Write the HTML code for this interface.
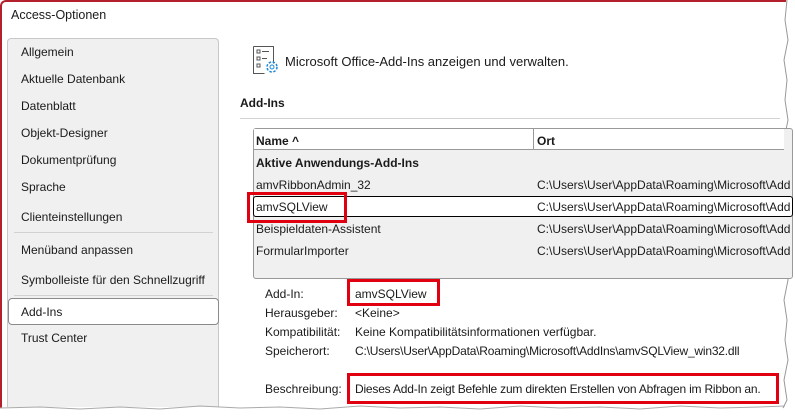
<!DOCTYPE html>
<html><head><meta charset="utf-8"><style>
*{margin:0;padding:0;box-sizing:border-box}
body{width:795px;height:419px;background:#fff;font-family:"Liberation Sans",sans-serif;font-size:12px;color:#1a1a1a;position:relative;overflow:hidden}
.a{position:absolute;white-space:nowrap}
.win{position:absolute;left:0;top:0;width:786px;height:408px;border-left:2px solid #b3202c;border-top:2px solid #b3202c;border-top-left-radius:6px;background:#fff}
.side{position:absolute;left:7px;top:38px;width:212px;height:369px;background:#f0f0f0;border:1px solid #c8c8c8;border-bottom:none;border-radius:4px 4px 0 0}
.sep{position:absolute;height:1px;background:#d2d2d2}
.red{position:absolute;border:3px solid #e00010}
</style></head><body>
<div class="win"></div>
<svg class="a" style="left:775px;top:0" width="20" height="419"><polyline fill="none" stroke="#999" stroke-width="1" points="12,0 10,20 13,40 9,60 12,80 10,100 13,120 9,140 12,160 10,180 13,200 9,220 12,240 10,260 13,280 9,300 12,320 10,340 13,360 9,380 12,400 8,408"/></svg>
<div class="side"></div>
<svg class="a" style="left:0;top:400px" width="795" height="19"><polyline fill="none" stroke="#aaa" stroke-width="1" points="0,8 40,7 80,9 120,7 160,9 200,6 240,8 280,7 320,9 360,6 400,8 440,7 480,9 520,6 560,8 600,7 640,9 680,6 720,8 760,7 785,6"/></svg>
<div class="a" style="left:11px;top:8px;font-size:12.5px">Access-Optionen</div>
<div class="a" style="left:21px;top:45px">Allgemein</div>
<div class="a" style="left:21px;top:72px">Aktuelle Datenbank</div>
<div class="a" style="left:21px;top:99px">Datenblatt</div>
<div class="a" style="left:21px;top:126px">Objekt-Designer</div>
<div class="a" style="left:21px;top:153px">Dokumentprüfung</div>
<div class="a" style="left:21px;top:180px">Sprache</div>
<div class="a" style="left:21px;top:210px">Clienteinstellungen</div>
<div class="sep" style="left:14px;top:232px;width:199px"></div>
<div class="a" style="left:21px;top:243px">Menüband anpassen</div>
<div class="a" style="left:21px;top:273px">Symbolleiste für den Schnellzugriff</div>
<div class="sep" style="left:14px;top:295px;width:199px"></div>
<div class="a" style="left:8px;top:298px;width:211px;height:27px;background:#fff;border:1px solid #8a8a8a;border-radius:4px"></div>
<div class="a" style="left:21px;top:305px">Add-Ins</div>
<div class="a" style="left:21px;top:331px">Trust Center</div>
<svg class="a" style="left:252px;top:45px" width="32" height="32" viewBox="0 0 32 32"><path d="M1.5 1.5h20v17" fill="none" stroke="#555"/><path d="M1.5 1.5v27h11" fill="none" stroke="#555"/><rect x="5" y="5" width="3" height="3" fill="none" stroke="#555"/><rect x="5" y="12" width="3" height="3" fill="none" stroke="#555"/><rect x="5" y="19" width="3" height="3" fill="none" stroke="#555"/><path d="M10 6.5h7M10 13.5h5" stroke="#555"/><circle cx="20" cy="22" r="5" fill="none" stroke="#1e88d6" stroke-width="1.5" stroke-dasharray="2.5 1.5"/><circle cx="20" cy="22" r="2" fill="none" stroke="#1e88d6"/></svg>
<div class="a" style="left:285px;top:54px;font-size:13px">Microsoft Office-Add-Ins anzeigen und verwalten.</div>
<div class="a" style="left:240px;top:96px;font-weight:bold">Add-Ins</div>
<div class="sep" style="left:240px;top:118px;width:540px"></div>
<div class="a" style="left:253px;top:128px;width:540px;height:151px;background:#f0f0f0;border:1px solid #999;border-radius:3px"></div>
<div class="a" style="left:254px;top:129px;width:530px;height:21px;background:#fff;border-bottom:1px solid #999"></div>
<div class="a" style="left:533px;top:129px;width:1px;height:21px;background:#999"></div>
<div class="a" style="left:256px;top:134px;font-weight:bold">Name ^</div>
<div class="a" style="left:537px;top:134px;font-weight:bold">Ort</div>
<div class="a" style="left:256px;top:156px;font-weight:bold">Aktive Anwendungs-Add-Ins</div>
<div class="a" style="left:256px;top:178px">amvRibbonAdmin_32</div>
<div class="a" style="left:537px;top:178px">C:\Users\User\AppData\Roaming\Microsoft\Add</div>
<div class="a" style="left:253px;top:196px;width:540px;height:21px;background:#fff;border:1.5px solid #000;border-radius:3px"></div>
<div class="a" style="left:256px;top:200px">amvSQLView</div>
<div class="a" style="left:537px;top:200px">C:\Users\User\AppData\Roaming\Microsoft\Add</div>
<div class="a" style="left:256px;top:222px">Beispieldaten-Assistent</div>
<div class="a" style="left:537px;top:222px">C:\Users\User\AppData\Roaming\Microsoft\Add</div>
<div class="a" style="left:256px;top:244px">FormularImporter</div>
<div class="a" style="left:537px;top:244px">C:\Users\User\AppData\Roaming\Microsoft\Add</div>
<div class="red" style="left:247px;top:192px;width:100px;height:31px"></div>
<div class="a" style="left:265px;top:287px">Add-In:</div>
<div class="a" style="left:355px;top:287px">amvSQLView</div>
<div class="a" style="left:265px;top:306px">Herausgeber:</div>
<div class="a" style="left:355px;top:306px">&lt;Keine&gt;</div>
<div class="a" style="left:265px;top:325px">Kompatibilität:</div>
<div class="a" style="left:355px;top:325px">Keine Kompatibilitätsinformationen verfügbar.</div>
<div class="a" style="left:265px;top:344px">Speicherort:</div>
<div class="a" style="left:355px;top:344px;letter-spacing:-0.2px">C:\Users\User\AppData\Roaming\Microsoft\AddIns\amvSQLView_win32.dll</div>
<div class="a" style="left:265px;top:382px">Beschreibung:</div>
<div class="a" style="left:355px;top:382px;letter-spacing:-0.2px">Dieses Add-In zeigt Befehle zum direkten Erstellen von Abfragen im Ribbon an.</div>
<div class="red" style="left:347px;top:279px;width:93px;height:27px"></div>
<div class="red" style="left:347px;top:373px;width:432px;height:31px"></div>
</body></html>
